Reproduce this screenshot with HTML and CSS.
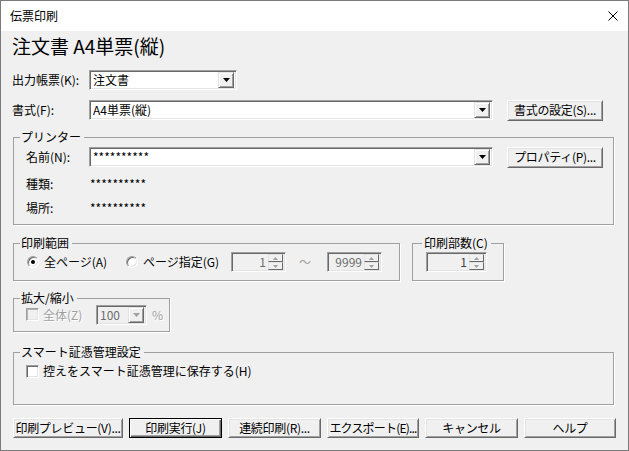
FILE: index.html
```html
<!DOCTYPE html>
<html lang="ja">
<head>
<meta charset="utf-8">
<title>伝票印刷</title>
<link rel="stylesheet" href="styles.css">
</head>
<body>
<div class="window">
  <div class="titlebar">
    <span class="title">伝票印刷</span>
    <svg class="close" width="10" height="10" viewBox="0 0 10 10"><path d="M0.5 0.5 L9.5 9.5 M9.5 0.5 L0.5 9.5" stroke="#000" stroke-width="1" fill="none"/></svg>
  </div>
  <div class="content">
    <h1 class="heading">注文書 A4単票(縦)</h1>

    <div class="row row-report">
      <span class="lbl lbl-main">出力帳票(K):</span>
      <div class="combo combo-report">
        <span class="combo-text">注文書</span>
        <span class="drop"><svg width="7" height="4" viewBox="0 0 7 4"><polygon points="0,0 7,0 3.5,4" fill="#000"/></svg></span>
      </div>
    </div>

    <div class="row row-format">
      <span class="lbl lbl-main">書式(F):</span>
      <div class="combo combo-wide">
        <span class="combo-text">A4単票(縦)</span>
        <span class="drop"><svg width="7" height="4" viewBox="0 0 7 4"><polygon points="0,0 7,0 3.5,4" fill="#000"/></svg></span>
      </div>
      <button class="btn btn-side">書式の設定(S)...</button>
    </div>

    <fieldset class="group group-printer">
      <legend class="legend">プリンター</legend>
      <div class="group-inner printer-inner">
        <div class="row row-name">
          <span class="lbl lbl-printer">名前(N):</span>
          <div class="combo combo-wide">
            <span class="combo-text">**********</span>
            <span class="drop"><svg width="7" height="4" viewBox="0 0 7 4"><polygon points="0,0 7,0 3.5,4" fill="#000"/></svg></span>
          </div>
          <button class="btn btn-side">プロパティ(P)...</button>
        </div>
        <div class="info-row">
          <span class="lbl lbl-printer">種類:</span>
          <span class="info-val">**********</span>
        </div>
        <div class="info-row">
          <span class="lbl lbl-printer">場所:</span>
          <span class="info-val">**********</span>
        </div>
      </div>
    </fieldset>

    <div class="range-row">
      <fieldset class="group group-range">
        <legend class="legend">印刷範囲</legend>
        <div class="group-inner range-inner">
          <label class="radio-item radio-all"><span class="radio checked"></span><span>全ページ(A)</span></label>
          <label class="radio-item radio-page"><span class="radio"></span><span>ページ指定(G)</span></label>
          <div class="spin spin-range">
            <span class="spin-val">1</span>
            <span class="spin-btns"><span class="spin-up"><svg width="5" height="3" viewBox="0 0 5 3"><polygon points="2.5,0 5,3 0,3" fill="#a0a0a0"/></svg></span><span class="spin-down"><svg width="5" height="3" viewBox="0 0 5 3"><polygon points="0,0 5,0 2.5,3" fill="#a0a0a0"/></svg></span></span>
          </div>
          <span class="tilde">～</span>
          <div class="spin spin-range">
            <span class="spin-val">9999</span>
            <span class="spin-btns"><span class="spin-up"><svg width="5" height="3" viewBox="0 0 5 3"><polygon points="2.5,0 5,3 0,3" fill="#a0a0a0"/></svg></span><span class="spin-down"><svg width="5" height="3" viewBox="0 0 5 3"><polygon points="0,0 5,0 2.5,3" fill="#a0a0a0"/></svg></span></span>
          </div>
        </div>
      </fieldset>
      <fieldset class="group group-copies">
        <legend class="legend legend-copies">印刷部数(C)</legend>
        <div class="group-inner copies-inner">
          <div class="spin spin-copies">
            <span class="spin-val">1</span>
            <span class="spin-btns"><span class="spin-up"><svg width="5" height="3" viewBox="0 0 5 3"><polygon points="2.5,0 5,3 0,3" fill="#a0a0a0"/></svg></span><span class="spin-down"><svg width="5" height="3" viewBox="0 0 5 3"><polygon points="0,0 5,0 2.5,3" fill="#a0a0a0"/></svg></span></span>
          </div>
        </div>
      </fieldset>
    </div>

    <fieldset class="group group-zoom">
      <legend class="legend">拡大/縮小</legend>
      <div class="group-inner zoom-inner">
        <label class="check-item disabled"><span class="check check-disabled"></span><span>全体(Z)</span></label>
        <div class="combo combo-zoom">
          <span class="combo-text">100</span>
          <span class="drop"><svg width="7" height="4" viewBox="0 0 7 4"><polygon points="0,0 7,0 3.5,4" fill="#a0a0a0"/></svg></span>
        </div>
        <span class="pct">%</span>
      </div>
    </fieldset>

    <fieldset class="group group-smart">
      <legend class="legend">スマート証憑管理設定</legend>
      <div class="group-inner smart-inner">
        <label class="check-item"><span class="check"></span><span>控えをスマート証憑管理に保存する(H)</span></label>
      </div>
    </fieldset>

    <div class="buttons">
      <button class="btn btn-b1">印刷プレビュー(V)...</button>
      <button class="btn btn-b2 btn-default">印刷実行(J)</button>
      <button class="btn btn-b3">連続印刷(R)...</button>
      <button class="btn btn-b4">エクスポート(E)...</button>
      <button class="btn btn-b5">キャンセル</button>
      <button class="btn btn-b6">ヘルプ</button>
    </div>
  </div>
</div>
</body>
</html>
```

FILE: styles.css
```css
* { box-sizing: border-box; }
html, body { margin: 0; padding: 0; }
body {
  font-family: "Noto Sans CJK JP", "Noto Sans", sans-serif;
  font-size: 12px;
  color: #000;
  background: #f0f0f0;
}
.window {
  width: 629px;
  height: 451px;
  border: 1px solid #7a7a7a;
  background: #f0f0f0;
  display: flex;
  flex-direction: column;
  overflow: hidden;
}
.titlebar {
  height: 30px;
  flex-shrink: 0;
  background: #fff;
  display: flex;
  align-items: center;
  justify-content: space-between;
  padding: 0 10px 0 9px;
}
.title { font-size: 12px; line-height: 14px; }
.close { display: block; }

.content {
  padding: 0 14px 0 11px;
  display: flex;
  flex-direction: column;
}
.heading {
  margin: 4px 0 0 0;
  font-size: 19px;
  font-weight: 400;
  line-height: 22px;
}
.row { display: flex; align-items: center; }
.row-report { margin-top: 13px; height: 20px; }
.row-format { margin-top: 9px; height: 22px; }
.lbl { line-height: 16px; white-space: nowrap; }
.lbl-main { width: 77px; flex-shrink: 0; }
.lbl-printer { width: 63px; flex-shrink: 0; }

/* combo boxes */
.combo {
  height: 20px;
  display: flex;
  align-items: center;
  background: #fff;
  border: 1px solid;
  border-color: #a0a0a0 #fff #fff #a0a0a0;
  box-shadow: inset 1px 1px 0 #696969, inset -1px -1px 0 #e3e3e3;
  padding: 2px 2px 2px 3px;
  flex-shrink: 0;
}
.combo-text { flex: 1; line-height: 16px; white-space: nowrap; overflow: hidden; }
.combo-report { width: 148px; }
.combo-wide { width: 404px; }
.drop {
  width: 16px;
  height: 16px;
  display: flex;
  align-items: center;
  justify-content: center;
  background: #f0f0f0;
  border: 1px solid;
  border-color: #e3e3e3 #696969 #696969 #e3e3e3;
  box-shadow: inset 1px 1px 0 #fff, inset -1px -1px 0 #a0a0a0;
  flex-shrink: 0;
}
.drop svg { display: block; }

/* buttons */
.btn {
  font: inherit;
  font-size: 12px;
  letter-spacing: -0.3px;
  color: #000;
  background: #f0f0f0;
  border: 1px solid;
  border-color: #fff #696969 #696969 #fff;
  box-shadow: inset 1px 1px 0 #e3e3e3, inset -1px -1px 0 #a0a0a0;
  height: 21px;
  line-height: 16px;
  padding: 0;
  white-space: nowrap;
  flex-shrink: 0;
  overflow: hidden;
}
.btn-side { width: 96px; margin-left: 14px; }
.btn-default {
  border-color: #000;
  box-shadow: inset 1px 1px 0 #fff, inset -1px -1px 0 #696969, inset -2px -2px 0 #a0a0a0;
}

/* group boxes */
.group {
  margin: 0 0 0 1px;
  padding: 0;
  border: 1px solid #a0a0a0;
  box-shadow: 1px 1px 0 #fff;
  min-width: 0;
}
.legend {
  margin-left: 6px;
  padding: 0 3px 0 1px;
  line-height: 14px;
  font-size: 12px;
}
.legend-copies { margin-left: 9px; padding: 0 3px 0 2px; }

.group-printer { margin-top: 9px; width: 601px; }
.printer-inner { padding: 2px 8px 8px 12px; }
.row-name { height: 22px; }
.info-row { display: flex; margin-top: 8px; height: 16px; align-items: center; }
.info-val { line-height: 16px; padding-left: 1px; }

.range-row { display: flex; margin-top: 11px; }
.group-range { width: 387px; }
.range-inner {
  display: flex;
  align-items: center;
  padding: 2px 0 8px 13px;
  height: 30px;
}
.radio-item { display: flex; align-items: center; gap: 5px; line-height: 16px; }
.radio-all { width: 99px; }
.radio-page { width: 105px; }
.radio {
  width: 12px;
  height: 12px;
  border-radius: 50%;
  border: 1px solid;
  border-color: #a0a0a0 #fff #fff #a0a0a0;
  box-shadow: inset 1px 1px 0 #696969, inset -1px -1px 0 #e3e3e3;
  background: #fff;
  display: flex;
  align-items: center;
  justify-content: center;
  flex-shrink: 0;
}
.radio.checked::after {
  content: "";
  width: 4px;
  height: 4px;
  border-radius: 50%;
  background: #000;
}
.spin {
  height: 20px;
  display: flex;
  align-items: center;
  background: #f0f0f0;
  border: 1px solid;
  border-color: #a0a0a0 #fff #fff #a0a0a0;
  box-shadow: inset 1px 1px 0 #696969, inset -1px -1px 0 #e3e3e3;
  padding: 2px 2px 2px 2px;
  flex-shrink: 0;
}
.spin-range { width: 55px; }
.spin-copies { width: 61px; margin-left: 13px; }
.spin-val {
  flex: 1;
  text-align: right;
  padding-right: 2px;
  color: #6d6d6d;
  line-height: 16px;
}
.spin-copies .spin-val { color: #444; }
.spin-btns { display: flex; flex-direction: column; width: 15px; height: 16px; }
.spin-up, .spin-down {
  height: 8px;
  display: flex;
  align-items: center;
  justify-content: center;
  background: #f0f0f0;
  border: 1px solid;
  border-color: #e3e3e3 #696969 #696969 #e3e3e3;
}
.spin-up svg, .spin-down svg { display: block; }
.tilde { width: 41px; padding-left: 13px; color: #a0a0a0; line-height: 16px; }

.group-copies { width: 92px; margin-left: 12px; }
.copies-inner { padding: 2px 0 8px 0; height: 30px; display: flex; align-items: center; }

.group-zoom { width: 157px; margin-top: 10px; }
.zoom-inner {
  display: flex;
  align-items: center;
  padding: 0 0 7px 12px;
  height: 26px;
}
.check-item { display: flex; align-items: center; gap: 4px; line-height: 16px; }
.check {
  width: 13px;
  height: 13px;
  border: 1px solid;
  border-color: #a0a0a0 #fff #fff #a0a0a0;
  box-shadow: inset 1px 1px 0 #696969, inset -1px -1px 0 #e3e3e3;
  background: #fff;
  flex-shrink: 0;
}
.check-disabled { background: #f0f0f0; box-shadow: inset 1px 1px 0 #b4b4b4, inset -1px -1px 0 #e3e3e3; }
.check-item.disabled { color: #a0a0a0; text-shadow: 1px 1px 0 #fff; width: 70px; }
.combo-zoom { width: 51px; height: 20px; background: #f0f0f0; color: #6d6d6d; }
.combo-zoom .drop { height: 16px; width: 16px; }
.pct { color: #a0a0a0; margin-left: 5px; font-size: 12px; line-height: 14px; text-shadow: 1px 1px 0 #fff; }

.group-smart { width: 601px; margin-top: 13px; }
.smart-inner { padding: 4px 0 25px 12px; }

.buttons { display: flex; gap: 6px; margin: 13px 0 0 1px; }
.buttons .btn { height: 20px; }
.btn-b1 { width: 110px; }
.btn-b2 { width: 93px; }
.btn-b3 { width: 93px; }
.btn-b4 { width: 92px; letter-spacing: -0.8px; }
.btn-b5 { width: 93px; }
.btn-b6 { width: 92px; }
```
